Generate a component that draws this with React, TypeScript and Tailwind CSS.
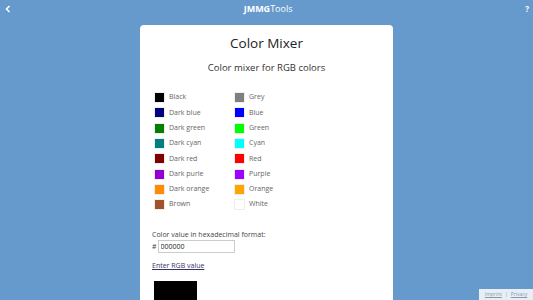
const colors: [string, string][] = [
  ["Black", "#000000"],
  ["Grey", "#808080"],
  ["Dark blue", "#000080"],
  ["Blue", "#0000ff"],
  ["Dark green", "#008000"],
  ["Green", "#00ff00"],
  ["Dark cyan", "#008080"],
  ["Cyan", "#00ffff"],
  ["Dark red", "#800000"],
  ["Red", "#ff0000"],
  ["Dark purle", "#9400d3"],
  ["Purple", "#a000ff"],
  ["Dark orange", "#ff8c00"],
  ["Orange", "#ffa500"],
  ["Brown", "#a0522d"],
  ["White", "#ffffff"],
];

function Swatch({ name, hex }: { name: string; hex: string }) {
  return (
    <div className="flex h-[15.3px] items-center gap-[4px]">
      <span
        className="block h-[11px] w-[11px] shrink-0 border border-[#eeeeee]"
        style={{ backgroundColor: hex }}
      />
      <span className="text-[7px] text-[#666]">{name}</span>
    </div>
  );
}

export default function App() {
  return (
    <div
      className="relative flex h-[300px] w-[533px] flex-col items-center overflow-hidden bg-[#6699cc]"
      style={{ fontFamily: '"Open Sans", sans-serif' }}
    >
      <header className="flex h-[17px] w-full shrink-0 items-center justify-between px-[4px] text-white">
        <svg width="6" height="8" viewBox="0 0 6 8" className="ml-[1px]">
          <path d="M4.5 1 L1.5 4 L4.5 7" stroke="white" strokeWidth="1.6" fill="none" />
        </svg>
        <div className="text-[9px] leading-none">
          <span className="font-bold">JMMG</span>
          <span>Tools</span>
        </div>
        <span className="text-[8px] font-bold">?</span>
      </header>

      <main className="mt-[8px] flex w-[253px] shrink-0 flex-col rounded-t-[4px] bg-white pb-[20px]">
        <h1 className="mt-[9px] text-center text-[13.5px] leading-[18px] text-[#222]">
          Color Mixer
        </h1>
        <p className="mt-[9px] text-center text-[9.5px] leading-[14px] text-[#333]">
          Color mixer for RGB colors
        </p>

        <div className="ml-[14px] mt-[15px] grid w-[160px] grid-cols-[80px_80px]">
          {colors.map(([name, hex]) => (
            <Swatch key={name} name={name} hex={hex} />
          ))}
        </div>

        <div className="ml-[12px] mt-[18px] flex flex-col">
          <span className="text-[7px] leading-[10px] text-[#444]">
            Color value in hexadecimal format:
          </span>
          <div className="flex items-center text-[7px] text-[#444]">
            <span className="mr-[1px]">#</span>
            <input
              readOnly
              value="000000"
              className="h-[13px] w-[77px] border border-[#cccccc] px-[2px] text-[7px] text-[#222] outline-none"
            />
          </div>
          <a href="#" className="mt-[8px] text-[7px] text-[#333366] underline">
            Enter RGB value
          </a>
          <div className="ml-[2px] mt-[9px] h-[30px] w-[43px] bg-black" />
        </div>
      </main>

      <div className="absolute bottom-0 right-0 flex h-[11px] w-[54px] items-center justify-center gap-[3px] bg-[#e8eef6] text-[5px] text-[#8899aa]">
        <span className="underline">Imprint</span>
        <span>|</span>
        <span className="underline">Privacy</span>
      </div>
    </div>
  );
}
